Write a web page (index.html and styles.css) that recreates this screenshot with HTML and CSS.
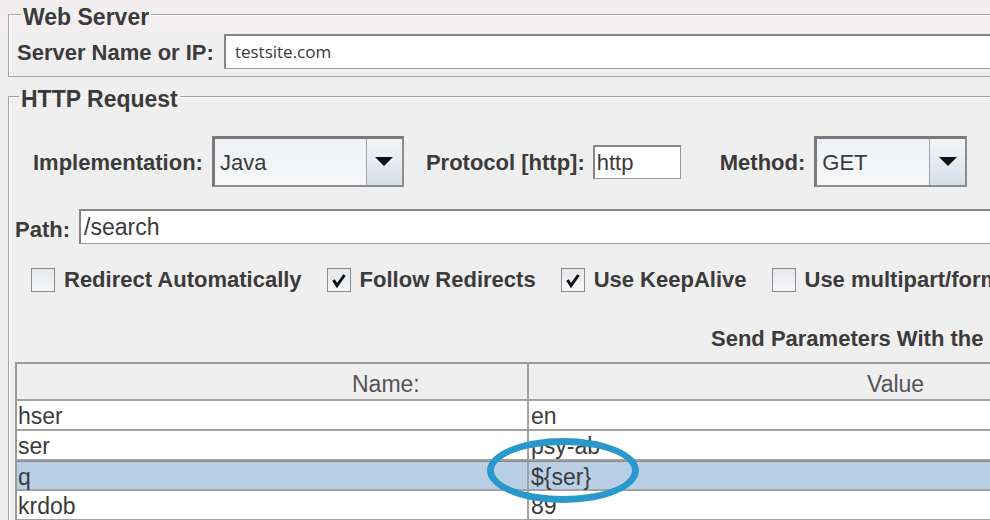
FILE: index.html
```html
<!DOCTYPE html>
<html lang="en">
  <head>
    <meta charset="UTF-8" />
    <meta name="viewport" content="width=device-width, initial-scale=1.0" />
    <title>HTTP Request</title>
    <link rel="stylesheet" href="styles.css">
  </head>
  <body>
    <div class="panel">
      <fieldset class="group server">
        <legend>Web Server</legend>
        <div class="row">
          <label class="label">Server Name or IP:</label>
          <div class="field wide host">testsite.com</div>
        </div>
      </fieldset>

      <fieldset class="group request">
        <legend>HTTP Request</legend>
        <div class="row impl-row">
          <label class="label">Implementation:</label>
          <div class="combo impl">
            <span class="combo-value">Java</span>
            <span class="combo-arrow"><svg width="18" height="10" viewBox="0 0 18 10"><polygon points="0,0 18,0 9,9" fill="#111"/></svg></span>
          </div>
          <label class="label protocol-label">Protocol [http]:</label>
          <div class="field protocol">http</div>
          <label class="label method-label">Method:</label>
          <div class="combo method">
            <span class="combo-value">GET</span>
            <span class="combo-arrow"><svg width="18" height="10" viewBox="0 0 18 10"><polygon points="0,0 18,0 9,9" fill="#111"/></svg></span>
          </div>
        </div>

        <div class="row path-row">
          <label class="label path-label">Path:</label>
          <div class="field wide path">/search</div>
        </div>

        <div class="row checks">
          <span class="check"><span class="box"></span>Redirect Automatically</span>
          <span class="check"><span class="box"><svg width="22" height="22" viewBox="0 0 22 22"><path d="M5.5 11 L9 16.5 L16.5 6" fill="none" stroke="#111" stroke-width="3"/></svg></span>Follow Redirects</span>
          <span class="check"><span class="box"><svg width="22" height="22" viewBox="0 0 22 22"><path d="M5.5 11 L9 16.5 L16.5 6" fill="none" stroke="#111" stroke-width="3"/></svg></span>Use KeepAlive</span>
          <span class="check"><span class="box"></span>Use multipart/form</span>
        </div>

        <p class="send">Send Parameters With the</p>

        <div class="table">
          <div class="tr head">
            <div class="td name">Name:</div>
            <div class="td value">Value</div>
          </div>
          <div class="tr">
            <div class="td name">hser</div>
            <div class="td value">en</div>
          </div>
          <div class="tr">
            <div class="td name">ser</div>
            <div class="td value">psy-ab</div>
          </div>
          <div class="tr selected">
            <div class="td name">q</div>
            <div class="td value">${ser}</div>
          </div>
          <div class="tr">
            <div class="td name">krdob</div>
            <div class="td value">89</div>
          </div>
          <div class="mark"></div>
        </div>
      </fieldset>
    </div>
  </body>
</html>
```

FILE: styles.css
```css
:root {
  --bg-color: #efefef;
  --text-color: #3b3b3b;
  --line-color: #a3a3a3;
  --select-color: #b9cfe6;
  --mark-color: #2898cd;
}

body {
  margin: 0;
  overflow: hidden;
  background: linear-gradient(#f2eeef, var(--bg-color) 60px);
  color: var(--text-color);
  font-family: "Liberation Sans", Arial, sans-serif;
}

.panel {
  width: 1300px;
  height: 520px;
}

.group {
  margin: 0 0 0 8px;
  padding: 0 0 0 6px;
  border: 1px solid var(--line-color);
  box-shadow: inset 1px 1px 0 #fff;
}

.group legend {
  margin-left: 4px;
  padding: 6px 2px 0;
  font-size: 23px;
  font-weight: bold;
  line-height: 18px;
}

.server {
  margin-top: 2px;
  padding: 0 0 7px 8px;
}

.request {
  margin-top: 7px;
  height: 460px;
}

.row {
  display: flex;
  align-items: center;
}

.label {
  font-size: 22px;
  font-weight: bold;
  line-height: 26px;
  white-space: nowrap;
}

.field {
  box-sizing: border-box;
  height: 35px;
  background: #fff;
  border: 1px solid #9a9a9a;
  border-top: 2px solid #858585;
  border-left: 2px solid #858585;
  font-size: 22px;
  line-height: 31px;
  white-space: nowrap;
}

.wide {
  flex: 1;
}

.server .row {
  padding-top: 8px;
}

.server .label {
  padding-top: 2px;
}

.host {
  margin-left: 10px;
  padding-left: 9px;
  font-family: "Open Sans", sans-serif;
  font-size: 17px;
}

.impl-row {
  margin-top: 28px;
  padding-left: 18px;
}

.impl-row .label {
  padding-top: 3px;
}

.combo {
  box-sizing: border-box;
  display: flex;
  height: 51px;
  margin-left: 9px;
  border: 2px solid #8d8d8d;
  border-top: 3px solid #7a7a7a;
  border-left: 3px solid #7a7a7a;
  background: linear-gradient(#eef1f5, #f6f7f9);
  font-size: 22px;
}

.combo-value {
  flex: 1;
  padding-left: 5px;
  line-height: 48px;
}

.combo-arrow {
  display: flex;
  align-items: center;
  justify-content: center;
  width: 35px;
  border-left: 1px solid #9da3aa;
  background: linear-gradient(#f3f6f9, #d6e0ea);
}

.impl {
  width: 192px;
}

.method {
  width: 153px;
}

.protocol-label {
  margin-left: 22px;
}

.protocol {
  width: 88px;
  height: 34px;
  margin-left: 8px;
  padding-left: 2px;
}

.method-label {
  margin-left: 39px;
}

.path-row {
  margin-top: 22px;
}

.path-label {
  padding-top: 6px;
}

.path {
  margin-left: 9px;
  padding-left: 3px;
  font-size: 23px;
  line-height: 33px;
}

.checks {
  margin-top: 23px;
  padding-left: 16px;
}

.check {
  display: flex;
  align-items: center;
  margin-right: 25px;
  font-size: 22px;
  font-weight: bold;
  white-space: nowrap;
}

.box {
  box-sizing: border-box;
  display: flex;
  align-items: center;
  justify-content: center;
  width: 24px;
  height: 24px;
  margin-right: 9px;
  border: 1px solid #8a8a8a;
  background: linear-gradient(#e4e7eb, #f7f8fa);
}

.send {
  margin: 33px 0 0 696px;
  font-size: 22px;
  font-weight: bold;
  line-height: 26px;
  white-space: nowrap;
}

.table {
  position: relative;
  margin-top: 10px;
  width: 1260px;
  border-top: 2px solid #9a9a9a;
  border-left: 2px solid #9a9a9a;
  font-size: 23px;
}

.tr {
  display: flex;
  height: 30px;
  background: #fff;
  border-bottom: 2px solid #a2a2a2;
  box-sizing: border-box;
  line-height: 30px;
}

.head {
  height: 37px;
  background: var(--bg-color);
  color: #555;
  line-height: 40px;
}

.head .name {
  padding-left: 335px;
}

.head .value {
  padding-left: 338px;
}

.selected {
  background: var(--select-color);
  border-top: 1px solid #888;
}

.td {
  box-sizing: border-box;
  padding-left: 1px;
  white-space: nowrap;
}

.name {
  width: 512px;
  border-right: 2px solid #a2a2a2;
}

.value {
  flex: 1;
  padding-left: 2px;
}

.mark {
  position: absolute;
  left: 470px;
  top: 74px;
  width: 138px;
  height: 51px;
  border: 7px solid var(--mark-color);
  border-radius: 50%;
}
```
